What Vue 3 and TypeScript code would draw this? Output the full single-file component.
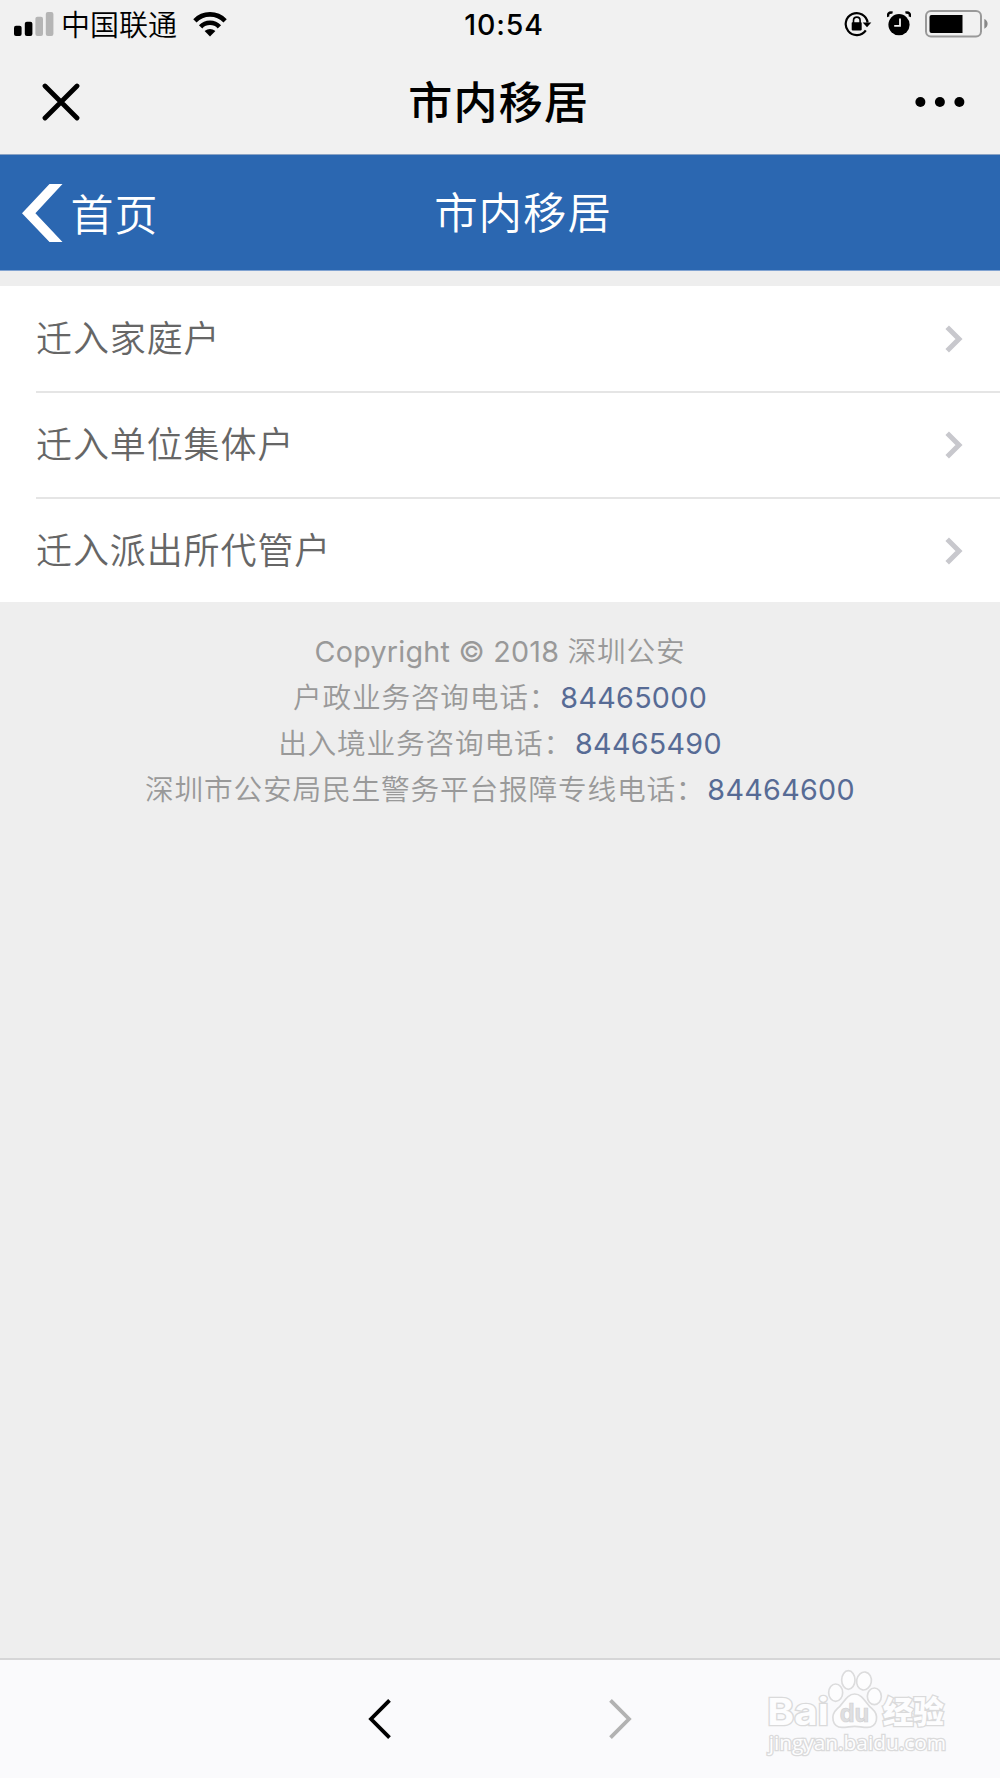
<script setup lang="ts">
interface Hotline {
  label: string
  phone: string
}

const pageTitle = '市内移居'

const entries: string[] = ['迁入家庭户', '迁入单位集体户', '迁入派出所代管户']

const hotlines: Hotline[] = [
  { label: '户政业务咨询电话：', phone: '84465000' },
  { label: '出入境业务咨询电话：', phone: '84465490' },
  { label: '深圳市公安局民生警务平台报障专线电话：', phone: '84464600' },
]
</script>

<template>
  <div class="screen">
    <header class="chrome">
      <div class="status">
        <div class="status-side">
          <svg class="signal" width="40" height="24" viewBox="0 0 40 24">
            <rect x="0" y="13.7" width="7.6" height="10.3" rx="2" />
            <rect x="10.8" y="9.7" width="7.6" height="14.3" rx="2" />
            <rect class="off" x="21.4" y="4.7" width="7.6" height="19.3" rx="2" />
            <rect class="off" x="31.8" y="0" width="7.6" height="24" rx="2" />
          </svg>
          <span class="carrier">中国联通</span>
          <svg class="wifi" width="34" height="25" viewBox="0 0 34 25">
            <path d="M1.9 8.8A21 21 0 0 1 32.1 8.8M7.6 14.8A13 13 0 0 1 26.4 14.8" fill="none" stroke="#000" stroke-width="4.6" />
            <path d="M11.6 19Q17 14.8 22.4 19L17 24.6Z" />
          </svg>
        </div>
        <span class="clock">10:54</span>
        <div class="status-side status-right">
          <svg class="lock" width="28" height="26" viewBox="0 0 28 26">
            <path d="M21.8 19.3A11 11 0 1 1 23.6 11.5" fill="none" stroke="#000" stroke-width="2.2" />
            <path d="M18.7 11.4H27.3L23 16.2Z" />
            <rect x="7.7" y="11.2" width="10" height="8.2" rx=".8" />
            <path d="M9.5 12V9.4a3.3 3.3 0 0 1 6.6 0V12" fill="none" stroke="#000" stroke-width="1.6" />
          </svg>
          <svg class="alarm" width="24" height="26" viewBox="0 0 24 26">
            <circle cx="12" cy="13.7" r="10.6" />
            <path d="M1.4 5.8C.2 3 2.1 .8 5.6 1.7M22.6 5.8C23.8 3 21.9 .8 18.4 1.7" fill="none" stroke="#000" stroke-width="2.4" />
            <path d="M13 7.5V14.8H7.2" fill="none" stroke="#f1f1f1" stroke-width="1.8" />
          </svg>
          <svg class="battery" width="63" height="28" viewBox="0 0 63 28">
            <rect x="1" y="1" width="55" height="25.5" rx="5" fill="none" stroke="#999" stroke-width="2" />
            <path d="M6.5 5H37.5V23H6.5A2 2 0 0 1 4.5 21V7A2 2 0 0 1 6.5 5Z" />
            <path d="M59.3 9Q62.6 10.4 62.6 13.8T59.3 18.8Z" fill="#888" />
          </svg>
        </div>
      </div>
      <nav class="nav">
        <svg width="38" height="38" viewBox="0 0 38 38">
          <path d="M3 3L35 35M35 3L3 35" fill="none" stroke="#000" stroke-width="4.8" stroke-linecap="round" />
        </svg>
        <h1 class="nav-title">{{ pageTitle }}</h1>
        <svg width="50" height="12" viewBox="0 0 50 12">
          <circle cx="5.4" cy="6" r="5" />
          <circle cx="24.9" cy="6" r="5" />
          <circle cx="44.4" cy="6" r="5" />
        </svg>
      </nav>
    </header>

    <div class="banner">
      <a class="home">
        <svg width="41" height="58" viewBox="0 0 41 58">
          <path d="M0 29.3L27.5 0H40.5L13.4 29.3L40.5 58H27.5Z" fill="#fff" />
        </svg>
        <span class="home-text">首页</span>
      </a>
      <h2 class="banner-title">{{ pageTitle }}</h2>
    </div>

    <ul class="list">
      <li v-for="entry in entries" :key="entry" class="row">
        <span class="row-text">{{ entry }}</span>
        <svg width="18" height="28" viewBox="0 0 18 28">
          <path d="M2.2 2.2L14 14L2.2 25.8" fill="none" stroke="#c8c8cd" stroke-width="5" />
        </svg>
      </li>
    </ul>

    <footer class="footer">
      <p><span class="copyright">Copyright © 2018 </span>深圳公安</p>
      <p v-for="line in hotlines" :key="line.phone">
        {{ line.label }}<a class="phone">{{ line.phone }}</a>
      </p>
    </footer>

    <div class="toolbar">
      <svg width="24" height="42" viewBox="0 0 24 42">
        <path d="M21.5 2.4L3 21L21.5 39.6" fill="none" stroke="#000" stroke-width="3.8" />
      </svg>
      <svg width="24" height="42" viewBox="0 0 24 42">
        <path d="M2.5 2.4L21 21L2.5 39.6" fill="none" stroke="#b2b2b2" stroke-width="3.8" />
      </svg>
      <svg class="watermark" width="185" height="90" viewBox="75 85 555 270">
        <g fill="#fdfdfe" stroke="#dcdcdd" stroke-width="5">
          <ellipse cx="287" cy="159" rx="21" ry="26" />
          <ellipse cx="325" cy="121" rx="20" ry="28" />
          <ellipse cx="372" cy="124" rx="22" ry="27" transform="rotate(10 372 124)" />
          <ellipse cx="403" cy="170" rx="21" ry="25" />
          <path d="M344 163C369 163 377 192 396 207C420 228 411 263 382 263C367 263 357 260 344 260C331 260 321 263 306 263C277 263 269 228 292 207C311 192 319 163 344 163Z" />
        </g>
        <g class="mark" stroke="#dadadb" stroke-width="8">
          <text class="latin" x="82" y="257" font-size="112" textLength="184" lengthAdjust="spacingAndGlyphs">Bai</text>
          <text class="cjk" x="428" y="250" font-size="92" textLength="184" lengthAdjust="spacingAndGlyphs">经验</text>
          <text class="url" x="86" y="331" font-size="61" textLength="532" lengthAdjust="spacingAndGlyphs">jingyan.baidu.com</text>
        </g>
        <text class="latin du" x="299" y="247" font-size="76" textLength="88" lengthAdjust="spacingAndGlyphs">du</text>
      </svg>
    </div>
  </div>
</template>

<style>
body {
  background: #eee;
}
</style>

<style scoped>
.screen {
  display: flex;
  flex-direction: column;
  width: 1000px;
  height: 1778px;
  overflow: hidden;
  background: #eee;
  color: #000;
  font-family: Inter, "Noto Sans CJK SC", sans-serif;
}
svg {
  display: block;
  flex: none;
}
h1,
h2,
p,
ul {
  margin: 0;
  padding: 0;
}
.chrome {
  height: 154px;
  background: #f1f1f1;
}
.status {
  display: flex;
  align-items: center;
  height: 48px;
  padding: 0 12px 0 14px;
}
.status-side {
  display: flex;
  flex: 1 1 0;
  align-items: center;
}
.signal .off {
  fill: #b5b5b5;
}
.carrier {
  margin: 4px 0 0 7px;
  font-size: 29px;
  font-weight: 350;
  line-height: 40px;
  white-space: nowrap;
}
.wifi {
  margin-left: 16px;
}
.clock {
  padding: 2px 0 0 6px;
  font-size: 28.5px;
  font-weight: 550;
  line-height: 40px;
  letter-spacing: 0.9px;
}
.status-right {
  justify-content: flex-end;
}
.alarm {
  margin-left: 15px;
}
.battery {
  margin-left: 14px;
}
.nav {
  display: flex;
  align-items: center;
  justify-content: space-between;
  height: 107px;
  padding: 0 35.5px 0 42px;
}
.nav-title {
  padding: 3px 0 0 3px;
  font-size: 44px;
  font-weight: 500;
  line-height: 60px;
  letter-spacing: 1.2px;
}
.banner {
  display: grid;
  grid-template-columns: 415px 216px 1fr;
  align-items: center;
  box-sizing: border-box;
  height: 117px;
  border-top: 1px solid #8ba3c4;
  border-bottom: 1px solid #81a3d1;
  background: #2b67b1;
  color: #fff;
}
.home {
  display: flex;
  align-items: center;
  padding-left: 22px;
}
.home-text {
  margin: 4px 0 0 7.5px;
  font-size: 43px;
  font-weight: 350;
  line-height: 60px;
  letter-spacing: 1px;
}
.banner-title {
  margin-top: 0;
  font-size: 43.5px;
  font-weight: 350;
  line-height: 60px;
  letter-spacing: 0.9px;
  text-align: center;
}
.list {
  margin-top: 15px;
  background: #fff;
  list-style: none;
}
.row {
  display: flex;
  align-items: center;
  justify-content: space-between;
  height: 105px;
  margin-left: 36px;
  padding-right: 37px;
}
.row + .row {
  height: 104px;
  border-top: 2px solid #e5e5e5;
}
.row:last-child {
  height: 103px;
}
.row-text {
  color: #666;
  font-size: 36px;
  font-weight: 350;
  line-height: 50px;
  letter-spacing: 0.9px;
}
.footer {
  padding-top: 26.5px;
  color: #999;
  font-size: 28.7px;
  font-weight: 350;
  line-height: 46px;
  letter-spacing: 0.8px;
  text-align: center;
  white-space: nowrap;
}
.copyright {
  font-weight: 400;
  letter-spacing: 0.25px;
}
.phone {
  margin-left: 2px;
  color: #576b95;
  font-weight: 400;
  letter-spacing: 0.3px;
}
.toolbar {
  position: relative;
  display: flex;
  align-items: center;
  justify-content: center;
  gap: 216px;
  box-sizing: border-box;
  height: 120px;
  margin-top: auto;
  border-top: 2px solid #d6d6d7;
  background: #fafafc;
}
.watermark {
  position: absolute;
  top: 8px;
  left: 765px;
}
.mark {
  fill: #fdfdfe;
  paint-order: stroke;
}
.latin {
  font-family: Inter, sans-serif;
  font-weight: 700;
}
.cjk {
  font-family: "Noto Sans CJK SC", sans-serif;
  font-weight: 900;
}
.url {
  font-family: "Open Sans", sans-serif;
  font-weight: 400;
}
.du {
  fill: #dfdfe1;
  stroke: #cfcfd1;
  stroke-width: 2;
}
</style>
